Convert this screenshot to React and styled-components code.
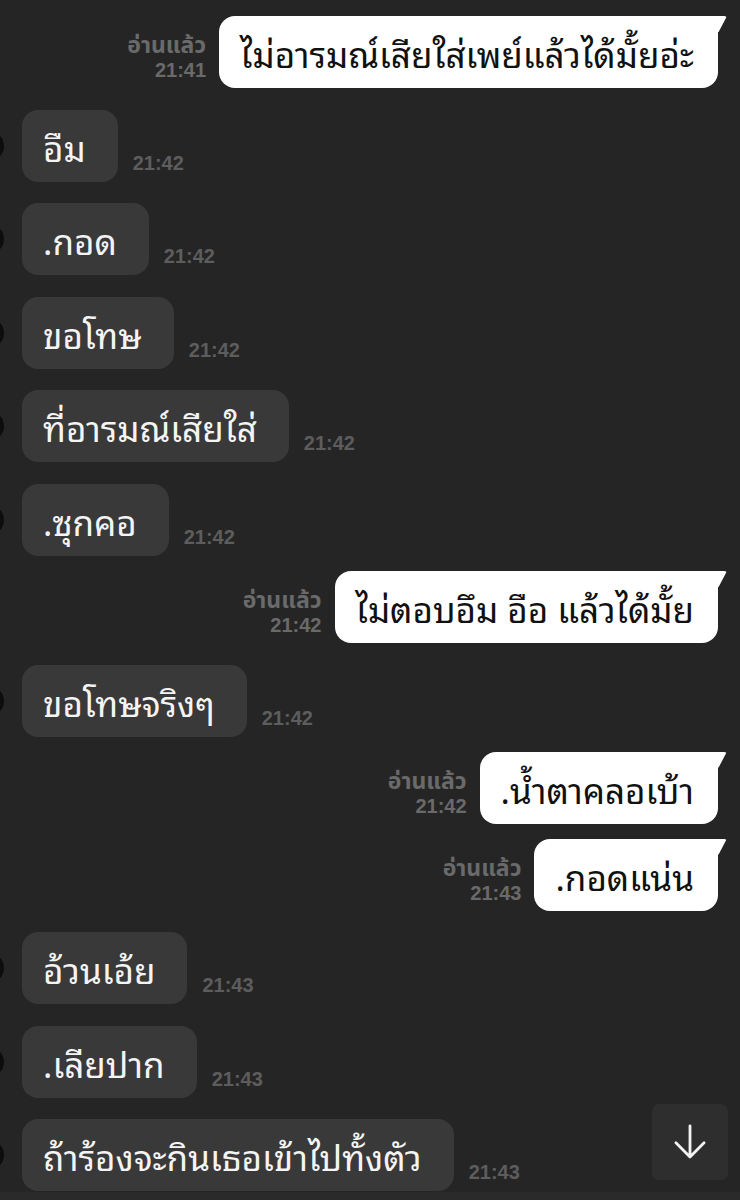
import React from "react";
import styled, { createGlobalStyle } from "styled-components";

const messages = [
  { id: 1, out: true, text: "ไม่อารมณ์เสียใส่เพย์แล้วได้มั้ยอ่ะ", time: "21:41" },
  { id: 2, text: "อืม", time: "21:42" },
  { id: 3, text: ".กอด", time: "21:42" },
  { id: 4, text: "ขอโทษ", time: "21:42" },
  { id: 5, text: "ที่อารมณ์เสียใส่", time: "21:42" },
  { id: 6, text: ".ซุกคอ", time: "21:42" },
  { id: 7, out: true, text: "ไม่ตอบอึม อือ แล้วได้มั้ย", time: "21:42" },
  { id: 8, text: "ขอโทษจริงๆ", time: "21:42" },
  { id: 9, out: true, text: ".น้ำตาคลอเบ้า", time: "21:42" },
  { id: 10, out: true, text: ".กอดแน่น", time: "21:43" },
  { id: 11, text: "อ้วนเอ้ย", time: "21:43" },
  { id: 12, text: ".เลียปาก", time: "21:43" },
  { id: 13, text: "ถ้าร้องจะกินเธอเข้าไปทั้งตัว", time: "21:43" },
];

function Chat() {
  return (
    <Screen>
      <List>
        {messages.map((m) => (
          <Row key={m.id} $out={m.out}>
            {m.out ? (
              <>
                <Meta>
                  <ReadLabel>อ่านแล้ว</ReadLabel>
                  <Time>{m.time}</Time>
                </Meta>
                <Bubble $out>{m.text}</Bubble>
              </>
            ) : (
              <>
                <Avatar />
                <Bubble>{m.text}</Bubble>
                <Meta $in>
                  <Time>{m.time}</Time>
                </Meta>
              </>
            )}
          </Row>
        ))}
      </List>
      <ScrollDown aria-label="scroll down">
        <svg width="52" height="52" viewBox="0 0 24 24" fill="none">
          <path
            d="M12 4.6v14.2M5.5 12.4l6.5 6.5 6.5-6.5"
            stroke="#f2f2f2"
            strokeWidth="1.3"
            strokeLinecap="round"
            strokeLinejoin="round"
          />
        </svg>
      </ScrollDown>
      <BottomStrip />
    </Screen>
  );
}

export default function App() {
  return (
    <>
      <GlobalStyle />
      <Chat />
    </>
  );
}

const GlobalStyle = createGlobalStyle`
  html, body {
    margin: 0;
    padding: 0;
    background: #252525;
  }
  body {
    font-family: "Noto Sans Thai Looped", "Noto Sans Thai", "Loma", "Garuda", "Noto Sans", sans-serif;
  }
`;

const Screen = styled.div`
  position: relative;
  width: 740px;
  height: 1200px;
  overflow: hidden;
  background: #252525;
`;

const List = styled.div`
  display: flex;
  flex-direction: column;
  padding-top: 16px;
`;

const Row = styled.div`
  display: flex;
  align-items: flex-end;
  justify-content: ${(p) => (p.$out ? "flex-end" : "flex-start")};
  margin-top: ${(p) => (p.$out ? "15px" : "21.6px")};
  padding-right: ${(p) => (p.$out ? "22px" : "0")};

  &:first-child {
    margin-top: 0;
  }
`;

const Avatar = styled.div`
  width: 30px;
  height: 30px;
  margin-left: -26px;
  margin-right: 18px;
  align-self: center;
  border-radius: 50%;
  background: #0d0d0d;
`;

const Bubble = styled.div`
  position: relative;
  box-sizing: border-box;
  height: 72px;
  display: flex;
  align-items: center;
  padding: ${(p) => (p.$out ? "0 24px 0 21px" : "0 32px 0 21px")};
  border-radius: 16px;
  border-top-right-radius: ${(p) => (p.$out ? "4px" : "16px")};
  background: ${(p) => (p.$out ? "#ffffff" : "#393939")};
  color: ${(p) => (p.$out ? "#111111" : "#f4f4f4")};
  font-size: 35px;
  white-space: nowrap;

  &::after {
    content: "";
    display: ${(p) => (p.$out ? "block" : "none")};
    position: absolute;
    top: 0;
    right: -9px;
    width: 14px;
    height: 16px;
    background: #ffffff;
    clip-path: polygon(0 0, 100% 0, 40% 100%, 0 100%);
    border-top-right-radius: 3px;
  }
`;

const Meta = styled.div`
  display: flex;
  flex-direction: column;
  align-items: flex-end;
  margin: ${(p) => (p.$in ? "0 0 7px 15px" : "0 13px 6px 0")};
  color: ${(p) => (p.$in ? "#5d5d5d" : "#6a6a6a")};
  font-family: "Liberation Sans", "Noto Sans Thai", sans-serif;
  font-weight: 700;
`;

const ReadLabel = styled.span`
  font-size: 23px;
  line-height: 25px;
`;

const Time = styled.span`
  font-size: 20px;
  line-height: 24px;
`;

const ScrollDown = styled.button`
  position: absolute;
  right: 12px;
  bottom: 20px;
  width: 76px;
  height: 76px;
  display: flex;
  align-items: center;
  justify-content: center;
  padding: 0;
  border: none;
  border-radius: 7px;
  background: #2e2e2e;
`;

const BottomStrip = styled.div`
  position: absolute;
  left: 0;
  right: 0;
  bottom: 0;
  height: 8px;
  background: #2a2a2a;
`;
